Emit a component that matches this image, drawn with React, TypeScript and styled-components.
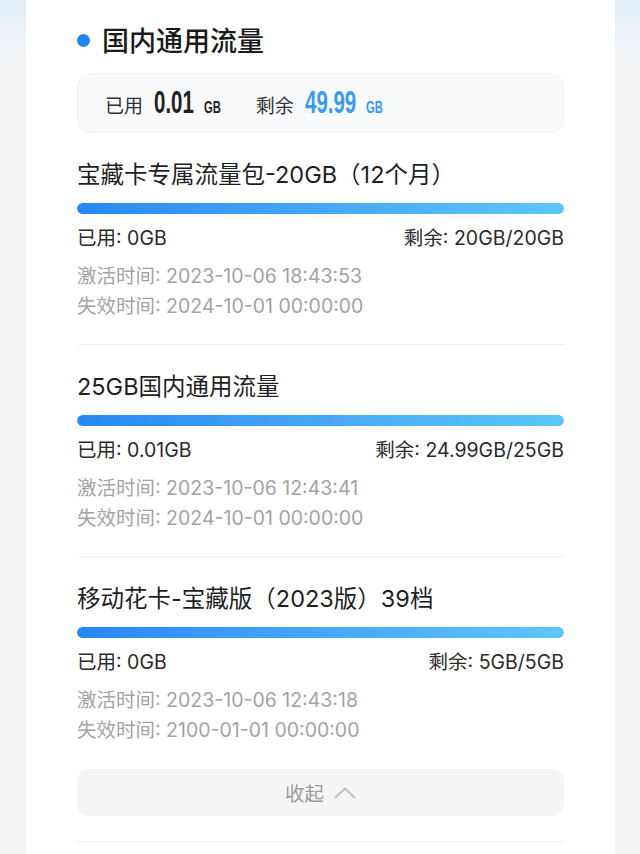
import React from 'react';
import styled, { createGlobalStyle } from 'styled-components';

const GlobalStyle = createGlobalStyle`
    html, body {
        margin: 0;
        padding: 0;
    }
    body {
        background: linear-gradient(180deg, #e2eefa 0px, #f5f5f5 70px, #f5f5f5 100%);
        font-family: "Inter", "Noto Sans CJK SC", sans-serif;
        color: #222;
    }
`;

// narrow digits, the page uses a condensed face that is not installed here
const NARROW = 0.66;

const Page = styled.div`
    padding: 0 25px 0 26px;
    height: 854px;
    overflow: hidden;
`;

const Card = styled.div`
    background: #fff;
    padding: 22px 51px 40px;
    min-height: 854px;
    box-sizing: border-box;
`;

const SectionHeader = styled.div`
    display: flex;
    align-items: center;
    gap: 12px;
    height: 36px;
`;

const Dot = styled.span`
    width: 13px;
    height: 13px;
    border-radius: 50%;
    background: #1f86f4;
    flex-shrink: 0;
`;

const SectionTitle = styled.h2`
    margin: 0;
    font-family: "Noto Sans CJK SC", sans-serif;
    font-size: 27px;
    font-weight: 500;
    color: #1a1a1a;
    line-height: 36px;
`;

const Summary = styled.div`
    margin-top: 15px;
    height: 60px;
    box-sizing: border-box;
    display: flex;
    align-items: center;
    padding-left: 27px;
    background: #f9fafc;
    border: 1px solid #f0f2f5;
    border-radius: 14px;
`;

const SummaryPart = styled.div`
    display: flex;
    align-items: baseline;
    & + & {
        margin-left: 35px;
    }
`;

const SummaryLabel = styled.span`
    font-family: "Noto Sans CJK SC", sans-serif;
    font-size: 19px;
    color: #333;
    margin-right: 11px;
`;

const Narrow = styled.span<{ $accent?: boolean; $size: number; $em: number }>`
    display: inline-block;
    font-family: "Liberation Sans", sans-serif;
    font-weight: 700;
    font-size: ${({ $size }) => $size}px;
    transform: scaleX(${NARROW});
    transform-origin: left center;
    margin-right: ${({ $em }) => -(1 - NARROW) * $em}em;
    color: ${({ $accent }) => ($accent ? '#3a9af0' : '#222')};
`;

const UnitGap = styled.span`
    display: inline-block;
    width: 10px;
`;

const Item = styled.div<{ $last?: boolean }>`
    padding: 25px 0 ${({ $last }) => ($last ? '0' : '23px')};
    border-bottom: ${({ $last }) => ($last ? 'none' : '1px solid #f0f0f0')};
`;

const ItemTitle = styled.div`
    font-size: 23.5px;
    line-height: 34px;
    color: #1f1f1f;
    white-space: nowrap;
`;

const Bar = styled.div`
    margin-top: 11px;
    height: 11px;
    border-radius: 6px;
    background: #eef3f8;
    overflow: hidden;
`;

const BarFill = styled.div`
    height: 100%;
    border-radius: 6px;
    background: linear-gradient(90deg, #2788f4 0%, #4aaaf7 55%, #5cc6fa 100%);
`;

const UsageRow = styled.div`
    margin-top: 9px;
    display: flex;
    justify-content: space-between;
    font-size: 19.5px;
    line-height: 30px;
    color: #2a2a2a;
`;

const TimeList = styled.div`
    margin-top: 8px;
    display: flex;
    flex-direction: column;
`;

const TimeLine = styled.div`
    font-size: 19.5px;
    line-height: 30px;
    color: #a3a3a3;
`;

const CollapseButton = styled.button`
    margin-top: 24px;
    width: 100%;
    height: 47px;
    border: none;
    border-radius: 12px;
    background: #f5f5f5;
    display: flex;
    align-items: center;
    justify-content: center;
    gap: 10px;
    font-family: "Noto Sans CJK SC", sans-serif;
    font-size: 19.5px;
    color: #9a9a9a;
    cursor: pointer;
`;

const Divider = styled.div`
    margin-top: 25px;
    height: 1px;
    background: #f0f0f0;
`;

const packages = [
    {
        name: '宝藏卡专属流量包-20GB（12个月）',
        used: '0GB',
        remain: '20GB/20GB',
        ratio: 1,
        active: '2023-10-06 18:43:53',
        expire: '2024-10-01 00:00:00',
    },
    {
        name: '25GB国内通用流量',
        used: '0.01GB',
        remain: '24.99GB/25GB',
        ratio: 24.99 / 25,
        active: '2023-10-06 12:43:41',
        expire: '2024-10-01 00:00:00',
    },
    {
        name: '移动花卡-宝藏版（2023版）39档',
        used: '0GB',
        remain: '5GB/5GB',
        ratio: 1,
        active: '2023-10-06 12:43:18',
        expire: '2100-01-01 00:00:00',
    },
];

// rough advance widths of Liberation Sans Bold, in em
const glyphEm: Record<string, number> = { '.': 0.278, G: 0.778, B: 0.722 };
const textEm = (s: string) => s.split('').reduce((sum, c) => sum + (glyphEm[c] ?? 0.556), 0);

const Amount: React.FC<{ value: string; accent?: boolean }> = ({ value, accent }) => (
    <>
        <Narrow $accent={accent} $size={31} $em={textEm(value)}>{value}</Narrow>
        <UnitGap />
        <Narrow $accent={accent} $size={17} $em={textEm('GB')}>GB</Narrow>
    </>
);

const ChevronUp = () => (
    <svg width="22" height="12" viewBox="0 0 22 12" fill="none">
        <polyline points="1.5,10.5 11,1.5 20.5,10.5" stroke="#c2c2c2" strokeWidth="2" strokeLinecap="round" strokeLinejoin="round" />
    </svg>
);

const App: React.FC = () => {
    return (
        <>
            <GlobalStyle />
            <Page>
                <Card>
                    <SectionHeader>
                        <Dot />
                        <SectionTitle>国内通用流量</SectionTitle>
                    </SectionHeader>
                    <Summary>
                        <SummaryPart>
                            <SummaryLabel>已用</SummaryLabel>
                            <Amount value="0.01" />
                        </SummaryPart>
                        <SummaryPart>
                            <SummaryLabel>剩余</SummaryLabel>
                            <Amount value="49.99" accent />
                        </SummaryPart>
                    </Summary>
                    {packages.map((pkg, index) => (
                        <Item key={index} $last={index === packages.length - 1}>
                            <ItemTitle>{pkg.name}</ItemTitle>
                            <Bar>
                                <BarFill style={{ width: `${pkg.ratio * 100}%` }} />
                            </Bar>
                            <UsageRow>
                                <span>已用: {pkg.used}</span>
                                <span>剩余: {pkg.remain}</span>
                            </UsageRow>
                            <TimeList>
                                <TimeLine>激活时间: {pkg.active}</TimeLine>
                                <TimeLine>失效时间: {pkg.expire}</TimeLine>
                            </TimeList>
                        </Item>
                    ))}
                    <CollapseButton>
                        收起
                        <ChevronUp />
                    </CollapseButton>
                    <Divider />
                </Card>
            </Page>
        </>
    );
};

export default App;
